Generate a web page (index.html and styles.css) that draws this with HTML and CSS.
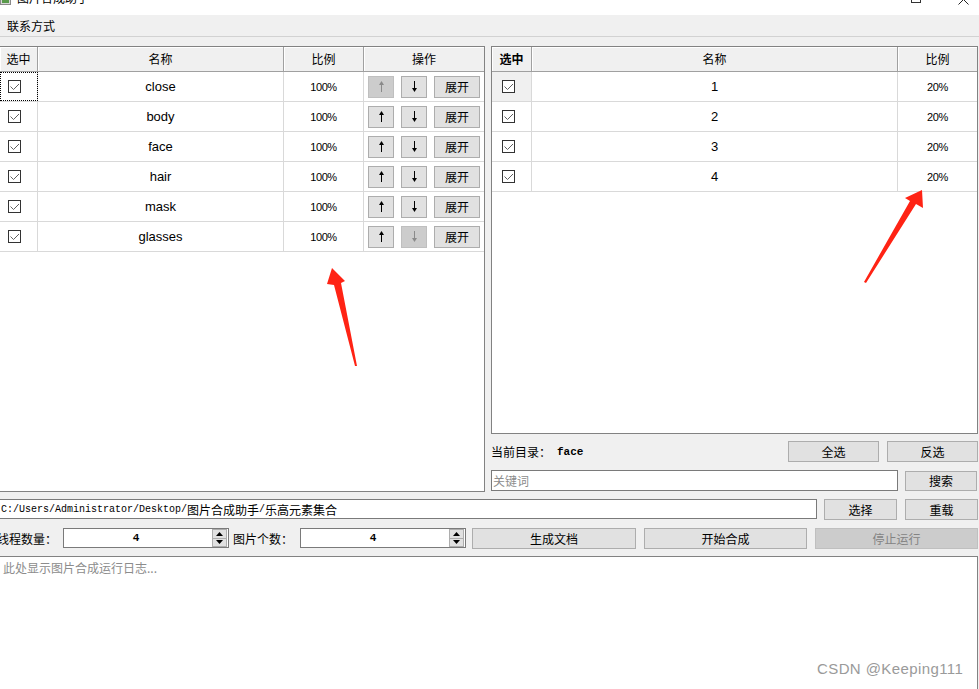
FILE: index.html
```html
<!DOCTYPE html>
<html lang="zh-CN">
<head>
<meta charset="utf-8">
<title>图片合成助手</title>
<link rel="stylesheet" href="styles.css">
</head>
<body>
<div class="window">
  <div class="titlebar">
    <div class="title-left">
      <span class="app-icon"><span class="ai-a"></span><span class="ai-b"></span></span>
      <span class="title-text">图片合成助手</span>
    </div>
    <div class="title-controls">
      <span class="ctl-max"></span>
      <svg class="ctl-close" width="11" height="11" viewBox="0 0 11 11"><path d="M0.5 0.5 L10.5 10.5 M10.5 0.5 L0.5 10.5" stroke="#222" stroke-width="1" fill="none"/></svg>
    </div>
  </div>
  <div class="menubar"><span class="menu-item">联系方式</span></div>

  <div class="content">
    <div class="main">
      <div class="frame panel-left">
        <div class="grid-left header">
          <div class="hcell">选中</div><div class="hcell">名称</div><div class="hcell">比例</div><div class="hcell hlast">操作</div>
        </div>

        <div class="grid-left row">
          <div class="cell chk-cell focus"><span class="checkbox"><svg width="11" height="11" viewBox="0 0 11 11"><path d="M1.5 5.5 L4.5 8.5 L10 3" stroke="#606060" stroke-width="1" fill="none"/></svg></span></div>
          <div class="cell name">close</div>
          <div class="cell pct">100%</div>
          <div class="cell ops">
            <span class="btn arrow-btn disabled"><svg width="7" height="11" viewBox="0 0 7 11"><path d="M3.5 0 L1 4 H6 Z" fill="#8a8a8a"/><rect x="3" y="3" width="1" height="8" fill="#8a8a8a"/></svg></span>
            <span class="btn arrow-btn"><svg width="7" height="11" viewBox="0 0 7 11"><path d="M3.5 11 L1 7 H6 Z" fill="#000"/><rect x="3" y="0" width="1" height="8" fill="#000"/></svg></span>
            <span class="btn expand-btn">展开</span>
          </div>
        </div>

        <div class="grid-left row">
          <div class="cell chk-cell"><span class="checkbox"><svg width="11" height="11" viewBox="0 0 11 11"><path d="M1.5 5.5 L4.5 8.5 L10 3" stroke="#606060" stroke-width="1" fill="none"/></svg></span></div>
          <div class="cell name">body</div>
          <div class="cell pct">100%</div>
          <div class="cell ops">
            <span class="btn arrow-btn"><svg width="7" height="11" viewBox="0 0 7 11"><path d="M3.5 0 L1 4 H6 Z" fill="#000"/><rect x="3" y="3" width="1" height="8" fill="#000"/></svg></span>
            <span class="btn arrow-btn"><svg width="7" height="11" viewBox="0 0 7 11"><path d="M3.5 11 L1 7 H6 Z" fill="#000"/><rect x="3" y="0" width="1" height="8" fill="#000"/></svg></span>
            <span class="btn expand-btn">展开</span>
          </div>
        </div>

        <div class="grid-left row">
          <div class="cell chk-cell"><span class="checkbox"><svg width="11" height="11" viewBox="0 0 11 11"><path d="M1.5 5.5 L4.5 8.5 L10 3" stroke="#606060" stroke-width="1" fill="none"/></svg></span></div>
          <div class="cell name">face</div>
          <div class="cell pct">100%</div>
          <div class="cell ops">
            <span class="btn arrow-btn"><svg width="7" height="11" viewBox="0 0 7 11"><path d="M3.5 0 L1 4 H6 Z" fill="#000"/><rect x="3" y="3" width="1" height="8" fill="#000"/></svg></span>
            <span class="btn arrow-btn"><svg width="7" height="11" viewBox="0 0 7 11"><path d="M3.5 11 L1 7 H6 Z" fill="#000"/><rect x="3" y="0" width="1" height="8" fill="#000"/></svg></span>
            <span class="btn expand-btn">展开</span>
          </div>
        </div>

        <div class="grid-left row">
          <div class="cell chk-cell"><span class="checkbox"><svg width="11" height="11" viewBox="0 0 11 11"><path d="M1.5 5.5 L4.5 8.5 L10 3" stroke="#606060" stroke-width="1" fill="none"/></svg></span></div>
          <div class="cell name">hair</div>
          <div class="cell pct">100%</div>
          <div class="cell ops">
            <span class="btn arrow-btn"><svg width="7" height="11" viewBox="0 0 7 11"><path d="M3.5 0 L1 4 H6 Z" fill="#000"/><rect x="3" y="3" width="1" height="8" fill="#000"/></svg></span>
            <span class="btn arrow-btn"><svg width="7" height="11" viewBox="0 0 7 11"><path d="M3.5 11 L1 7 H6 Z" fill="#000"/><rect x="3" y="0" width="1" height="8" fill="#000"/></svg></span>
            <span class="btn expand-btn">展开</span>
          </div>
        </div>

        <div class="grid-left row">
          <div class="cell chk-cell"><span class="checkbox"><svg width="11" height="11" viewBox="0 0 11 11"><path d="M1.5 5.5 L4.5 8.5 L10 3" stroke="#606060" stroke-width="1" fill="none"/></svg></span></div>
          <div class="cell name">mask</div>
          <div class="cell pct">100%</div>
          <div class="cell ops">
            <span class="btn arrow-btn"><svg width="7" height="11" viewBox="0 0 7 11"><path d="M3.5 0 L1 4 H6 Z" fill="#000"/><rect x="3" y="3" width="1" height="8" fill="#000"/></svg></span>
            <span class="btn arrow-btn"><svg width="7" height="11" viewBox="0 0 7 11"><path d="M3.5 11 L1 7 H6 Z" fill="#000"/><rect x="3" y="0" width="1" height="8" fill="#000"/></svg></span>
            <span class="btn expand-btn">展开</span>
          </div>
        </div>

        <div class="grid-left row">
          <div class="cell chk-cell"><span class="checkbox"><svg width="11" height="11" viewBox="0 0 11 11"><path d="M1.5 5.5 L4.5 8.5 L10 3" stroke="#606060" stroke-width="1" fill="none"/></svg></span></div>
          <div class="cell name">glasses</div>
          <div class="cell pct">100%</div>
          <div class="cell ops">
            <span class="btn arrow-btn"><svg width="7" height="11" viewBox="0 0 7 11"><path d="M3.5 0 L1 4 H6 Z" fill="#000"/><rect x="3" y="3" width="1" height="8" fill="#000"/></svg></span>
            <span class="btn arrow-btn disabled"><svg width="7" height="11" viewBox="0 0 7 11"><path d="M3.5 11 L1 7 H6 Z" fill="#8a8a8a"/><rect x="3" y="0" width="1" height="8" fill="#8a8a8a"/></svg></span>
            <span class="btn expand-btn">展开</span>
          </div>
        </div>
      </div>

      <div class="panel-right">
        <div class="frame table-right">
          <div class="grid-right header">
            <div class="hcell hbold">选中</div><div class="hcell">名称</div><div class="hcell hlast">比例</div>
          </div>
          <div class="grid-right row">
            <div class="cell chk-cell r-chk current"><span class="checkbox"><svg width="11" height="11" viewBox="0 0 11 11"><path d="M1.5 5.5 L4.5 8.5 L10 3" stroke="#606060" stroke-width="1" fill="none"/></svg></span></div>
            <div class="cell name">1</div>
            <div class="cell pct last">20%</div>
          </div>
          <div class="grid-right row">
            <div class="cell chk-cell r-chk"><span class="checkbox"><svg width="11" height="11" viewBox="0 0 11 11"><path d="M1.5 5.5 L4.5 8.5 L10 3" stroke="#606060" stroke-width="1" fill="none"/></svg></span></div>
            <div class="cell name">2</div>
            <div class="cell pct last">20%</div>
          </div>
          <div class="grid-right row">
            <div class="cell chk-cell r-chk"><span class="checkbox"><svg width="11" height="11" viewBox="0 0 11 11"><path d="M1.5 5.5 L4.5 8.5 L10 3" stroke="#606060" stroke-width="1" fill="none"/></svg></span></div>
            <div class="cell name">3</div>
            <div class="cell pct last">20%</div>
          </div>
          <div class="grid-right row">
            <div class="cell chk-cell r-chk"><span class="checkbox"><svg width="11" height="11" viewBox="0 0 11 11"><path d="M1.5 5.5 L4.5 8.5 L10 3" stroke="#606060" stroke-width="1" fill="none"/></svg></span></div>
            <div class="cell name">4</div>
            <div class="cell pct last">20%</div>
          </div>
        </div>

        <div class="dir-row">
          <span class="dir-label">当前目录：</span>
          <span class="dir-value">face</span>
          <span class="spacer"></span>
          <span class="btn wide-btn">全选</span>
          <span class="btn wide-btn">反选</span>
        </div>
        <div class="search-row">
          <span class="input search-input"><span class="placeholder">关键词</span></span>
          <span class="btn search-btn">搜索</span>
        </div>
      </div>
    </div>

    <div class="path-row">
      <span class="input path-input"><span class="mono">C:/Users/Administrator/Desktop/</span><span class="cjk">图片合成助手</span><span class="mono">/</span><span class="cjk">乐高元素集合</span></span>
      <span class="btn path-btn">选择</span>
      <span class="btn path-btn">重载</span>
    </div>

    <div class="spin-row">
      <span class="spin-label first">线程数量：</span>
      <span class="spinbox">
        <span class="spin-value">4</span>
        <span class="spin-arrows">
          <span class="spin-up"><svg width="7" height="4" viewBox="0 0 7 4"><path d="M3.5 0 L7 4 H0 Z" fill="#000"/></svg></span>
          <span class="spin-down"><svg width="7" height="4" viewBox="0 0 7 4"><path d="M0 0 H7 L3.5 4 Z" fill="#000"/></svg></span>
        </span>
      </span>
      <span class="spin-label second">图片个数：</span>
      <span class="spinbox">
        <span class="spin-value">4</span>
        <span class="spin-arrows">
          <span class="spin-up"><svg width="7" height="4" viewBox="0 0 7 4"><path d="M3.5 0 L7 4 H0 Z" fill="#000"/></svg></span>
          <span class="spin-down"><svg width="7" height="4" viewBox="0 0 7 4"><path d="M0 0 H7 L3.5 4 Z" fill="#000"/></svg></span>
        </span>
      </span>
      <span class="btn act-btn gen">生成文档</span>
      <span class="btn act-btn">开始合成</span>
      <span class="btn act-btn disabled">停止运行</span>
    </div>

    <div class="log"><span class="placeholder">此处显示图片合成运行日志...</span></div>
  </div>

  <svg class="arrows" width="979" height="689" viewBox="0 0 979 689">
    <polygon points="332,268 345,281 341,283 357,366 355,366 334,285 327,284" fill="#ff2314"/>
    <polygon points="922,190 923,208 916,204 866,283 864,282 910,201 905,198" fill="#ff2314"/>
  </svg>
  <div class="watermark">CSDN @Keeping111</div>
</div>
</body>
</html>
```

FILE: styles.css
```css
* { box-sizing: border-box; }
html, body { margin: 0; padding: 0; }
body {
  background: #f0f0f0;
  font-family: "Noto Sans CJK SC", "Liberation Sans", sans-serif;
  font-size: 12px;
  color: #000;
  overflow: hidden;
}
.window {
  position: relative;
  width: 979px;
  height: 689px;
  overflow: hidden;
  background: #f0f0f0;
  display: flex;
  flex-direction: column;
}

/* title bar (clipped) */
.titlebar {
  flex: none;
  height: 15px;
  background: #fff;
  overflow: hidden;
  display: flex;
  justify-content: space-between;
}
.title-left { display: flex; align-items: flex-start; margin-top: -10px; }
.app-icon { position: relative; width: 11px; height: 14px; margin-top: 1px; display: block; }
.ai-a { position: absolute; left: 0; top: 0; width: 11px; height: 14px; background: #d8d8d8; border: 1px solid #8a8a8a; }
.ai-b { position: absolute; left: 2px; top: 6px; width: 7px; height: 6px; background: #5a9a4c; }
.title-text { margin-left: 6px; font-size: 12px; line-height: 16px; color: #000; }
.title-controls { display: flex; align-items: flex-start; }
.ctl-max { width: 10px; height: 10px; border: 1px solid #333; margin-top: -7px; margin-right: 37px; }
.ctl-close { margin-top: -6px; margin-right: 10px; }

/* menu bar */
.menubar {
  flex: none;
  height: 22px;
  border-bottom: 1px solid #d2d2d2;
  background: #f0f0f0;
}
.menu-item { display: inline-block; padding-left: 7px; line-height: 21px; font-size: 12px; }

/* content */
.content {
  flex: 1;
  margin-left: -1px;
  width: 979px;
  padding-top: 9px;
  display: flex;
  flex-direction: column;
}
.main { display: flex; gap: 6px; height: 446px; flex: none; }

.frame { border: 1px solid #828282; background: #fff; }
.panel-left { width: 486px; height: 446px; }
.panel-right { width: 487px; display: flex; flex-direction: column; }
.table-right { height: 388px; }

.grid-left { display: grid; grid-template-columns: 38px 246px 80px 120px; }
.grid-right { display: grid; grid-template-columns: 40px 366px 79px; }

.header {
  height: 25px;
  border-bottom: 1px solid #a0a0a0;
  background: #f0f0f0;
}
.hcell {
  display: flex;
  align-items: center;
  justify-content: center;
  border-right: 1px solid #a0a0a0;
  box-shadow: inset 1px 1px 0 #ffffff;
  font-size: 12px;
  line-height: 16px;
  padding-bottom: 1px;
}
.hcell.hlast { border-right: none; }
.hcell.hbold { font-weight: bold; }

.row { height: 30px; border-bottom: 1px solid #d9d9d9; }
.cell {
  display: flex;
  align-items: center;
  border-right: 1px solid #d9d9d9;
}
.cell.last { border-right: none; }
.cell.ops { border-right: none; padding-left: 4px; gap: 7px; }
.name {
  justify-content: center;
  font-family: "Liberation Sans", "Noto Sans CJK SC", sans-serif;
  font-size: 13px;
}
.pct {
  justify-content: center;
  font-family: "Liberation Sans", sans-serif;
  font-size: 11px;
  letter-spacing: -0.4px;
}
.chk-cell { padding-left: 8px; }
.chk-cell.r-chk { padding-left: 10px; }
.chk-cell.current { background: #f0f0f0; }
.chk-cell.focus { outline: 1px dotted #000; outline-offset: -1px; }
.checkbox {
  width: 13px;
  height: 13px;
  border: 1px solid #333;
  background: #fff;
  display: flex;
  align-items: center;
  justify-content: center;
}

/* buttons */
.btn {
  display: inline-flex;
  align-items: center;
  justify-content: center;
  background: #e1e1e1;
  border: 1px solid #adadad;
  font-size: 12px;
  line-height: 16px;
  color: #000;
  flex: none;
}
.btn.disabled { background: #cccccc; border-color: #bfbfbf; color: #838383; }
.arrow-btn { width: 26px; height: 22px; }
.expand-btn { width: 46px; height: 22px; }

.dir-row { display: flex; align-items: center; height: 21px; margin-top: 7px; gap: 0; }
.dir-label { font-size: 12px; }
.dir-value { font-family: "Liberation Mono", monospace; font-weight: bold; font-size: 11px; margin-left: 6px; }
.spacer { flex: 1; }
.wide-btn { width: 91px; height: 21px; margin-left: 8px; }

.search-row { display: flex; align-items: flex-start; margin-top: 8px; }
.input { display: flex; align-items: center; background: #fff; border: 1px solid #7a7a7a; overflow: hidden; white-space: nowrap; }
.search-input { width: 407px; height: 21px; padding-left: 1px; }
.search-btn { width: 72px; height: 20px; margin-left: 7px; margin-top: 1px; }
.placeholder { color: #8c8c8c; font-size: 12px; }

.path-row { display: flex; align-items: flex-start; margin-top: 7px; height: 21px; flex: none; }
.path-input { width: 818px; height: 20px; padding-left: 1px; }
.mono { font-family: "Liberation Mono", monospace; font-size: 10px; }
.cjk { font-size: 12px; }
.path-btn { width: 73px; height: 21px; }
.path-input + .path-btn { margin-left: 7px; }
.path-btn + .path-btn { margin-left: 8px; }

.spin-row { display: flex; align-items: flex-start; margin-top: 8px; height: 21px; flex: none; }
.spin-label { height: 20px; display: flex; align-items: center; font-size: 12px; flex: none; }
.spin-label.first { width: 66px; margin-left: -2px; }
.spin-label.second { width: 71px; padding-left: 4px; }
.spinbox { position: relative; width: 166px; height: 20px; border: 1px solid #7a7a7a; background: #fff; display: flex; flex: none; }
.spin-value { flex: 1; display: flex; align-items: center; justify-content: center; font-family: "Liberation Mono", monospace; font-size: 11px; font-weight: bold; padding-right: 4px; }
.spin-arrows { width: 15px; display: flex; flex-direction: column; margin: 0 1px 0 0; }
.spin-up, .spin-down { flex: 1; display: flex; align-items: center; justify-content: center; background: #e1e1e1; border: 1px solid #adadad; }
.spin-down { border-top: none; }
.act-btn { width: 163px; height: 21px; margin-left: 8px; }
.act-btn.gen { width: 164px; margin-left: 6px; }

.log {
  flex: 1;
  margin-top: 7px;
  background: #fff;
  border-top: 1px solid #828282;
  border-right: 1px solid #828282;
  border-left: 1px solid #828282;
  padding: 3px 0 0 3px;
  line-height: 16px;
}

.arrows { position: absolute; left: 0; top: 0; pointer-events: none; }
.watermark {
  position: absolute;
  left: 817px;
  top: 660px;
  font-family: "Liberation Sans", sans-serif;
  font-size: 15px;
  letter-spacing: 0.4px;
  color: #9a9a9a;
  white-space: nowrap;
}
```
